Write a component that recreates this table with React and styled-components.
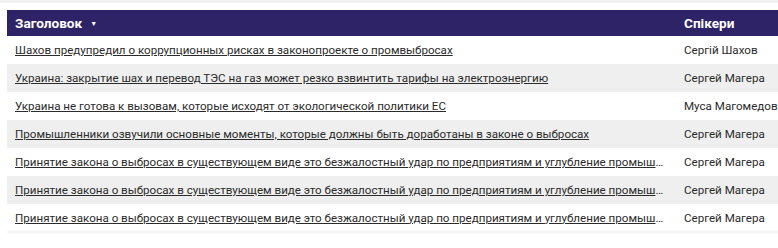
import styled, { createGlobalStyle } from 'styled-components';

const GlobalStyle = createGlobalStyle`
  html, body {
    margin: 0;
    padding: 0;
    background: #ffffff;
    overflow: hidden;
  }
  body {
    font-family: Roboto, 'Liberation Sans', Arial, sans-serif;
  }
`;

const Page = styled.div`
  border-top: 3px solid #f1f1f1;
  padding: 7px 0 0 7px;
  width: 771px;
`;

const Table = styled.table`
  border-collapse: collapse;
  table-layout: fixed;
  width: 771px;
  border-bottom: 2px solid #f4f4f4;
`;

const HeadCell = styled.th`
  background: #2e2366;
  color: #ffffff;
  font-size: 13.6px;
  font-weight: 700;
  text-align: left;
  height: 26px;
  padding: 0 8px;
  width: ${({ $w }) => ($w ? `${$w}px` : 'auto')};
  box-sizing: border-box;
  white-space: nowrap;
`;

const Caret = styled.span`
  display: inline-block;
  margin-left: 8px;
  font-size: 7px;
  vertical-align: 2px;
`;

const Row = styled.tr`
  background: ${({ $shaded }) => ($shaded ? '#efefef' : '#ffffff')};
`;

const Cell = styled.td`
  height: 28px;
  padding: 0 ${({ $tight }) => ($tight ? '0 0 8px' : '8px')};
  font-size: 11.6px;
  color: #2b2b2b;
  white-space: nowrap;
  overflow: hidden;
  text-overflow: ${({ $tight }) => ($tight ? 'clip' : 'ellipsis')};
  box-sizing: border-box;
`;

const TitleLink = styled.a`
  display: block;
  overflow: hidden;
  text-overflow: ellipsis;
  white-space: nowrap;
  color: #2b2b2b;
  text-decoration: underline;
`;

const rows = [
  ['Шахов предупредил о коррупционных рисках в законопроекте о промвыбросах', 'Сергій Шахов'],
  ['Украина: закрытие шах и перевод ТЭС на газ может резко взвинтить тарифы на электроэнергию', 'Сергей Магера'],
  ['Украина не готова к вызовам, которые исходят от экологической политики ЕС', 'Муса Магомедов'],
  ['Промышленники озвучили основные моменты, которые должны быть доработаны в законе о выбросах', 'Сергей Магера'],
  ['Принятие закона о выбросах в существующем виде это безжалостный удар по предприятиям и углубление промышленного кризиса', 'Сергей Магера'],
  ['Принятие закона о выбросах в существующем виде это безжалостный удар по предприятиям и углубление промышленного кризиса', 'Сергей Магера'],
  ['Принятие закона о выбросах в существующем виде это безжалостный удар по предприятиям и углубление промышленного кризиса', 'Сергей Магера'],
];

export default function App() {
  return (
    <>
      <GlobalStyle />
      <Page>
        <Table>
          <thead>
            <tr>
              <HeadCell $w={669}>
                Заголовок<Caret>▼</Caret>
              </HeadCell>
              <HeadCell>Спікери</HeadCell>
            </tr>
          </thead>
          <tbody>
            {rows.map(([title, speaker], i) => (
              <Row key={i} $shaded={i % 2 === 1}>
                <Cell>
                  <TitleLink href="#">{title}</TitleLink>
                </Cell>
                <Cell $tight>{speaker}</Cell>
              </Row>
            ))}
          </tbody>
        </Table>
      </Page>
    </>
  );
}
